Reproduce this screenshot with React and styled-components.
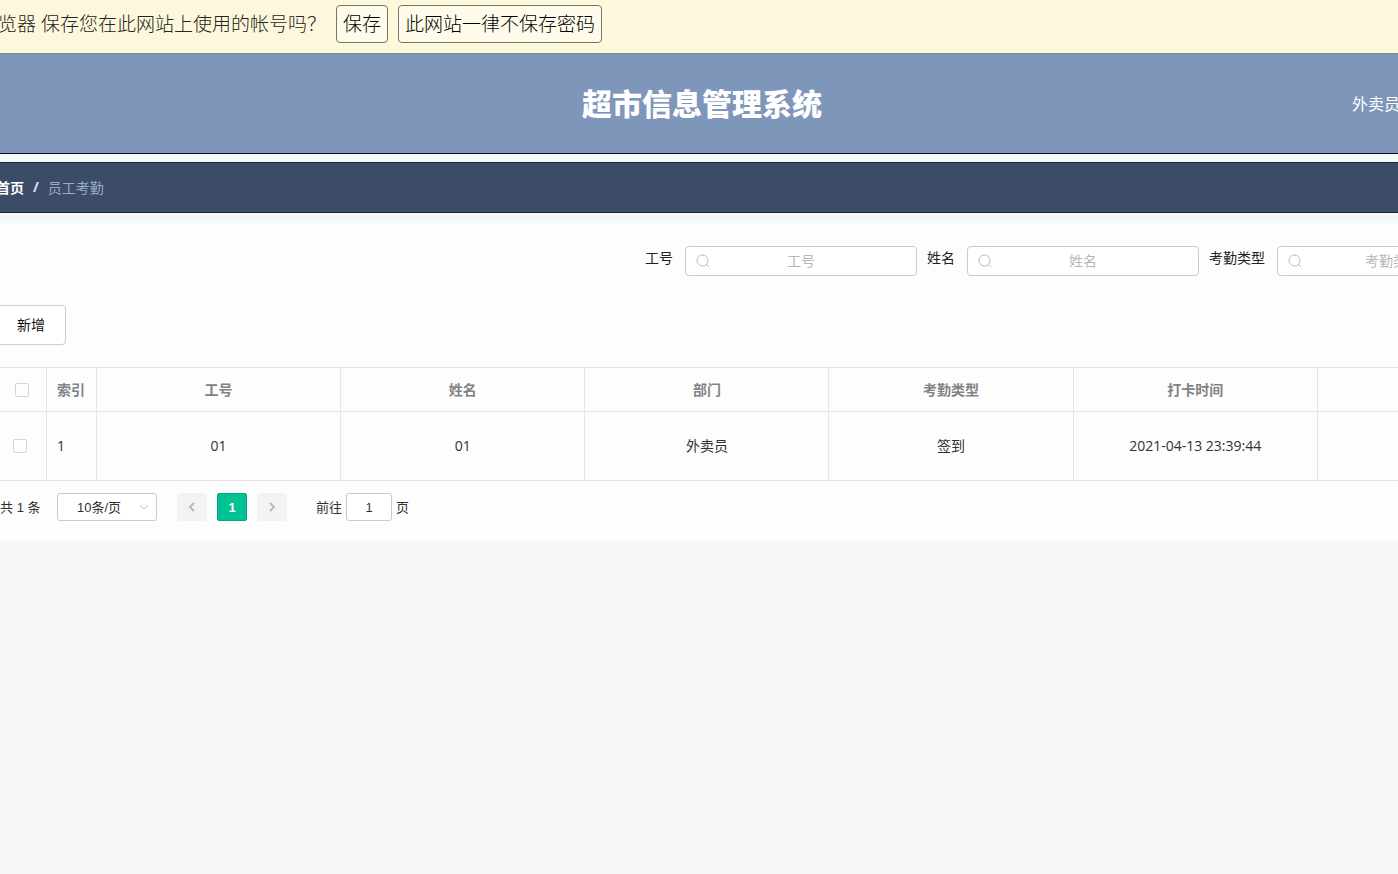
import React, { useState } from 'react';
import styled, { createGlobalStyle } from 'styled-components';

const GlobalStyle = createGlobalStyle`
  * {
    box-sizing: border-box;
  }

  body {
    margin: 0;
    background: #f6f7f9;
    color: #303133;
    font-family: "Open Sans", "Noto Sans CJK SC", sans-serif;
    font-size: 14px;
    overflow: hidden;
  }

  button, input, select {
    font-family: inherit;
    margin: 0;
  }
`;

const Page = styled.div`
  margin-left: -4px;
  overflow: hidden;
`;

const Notice = styled.div`
  display: flex;
  align-items: flex-start;
  height: 54px;
  padding: 5px 2px;
  background: #fdf8dc;
  border-bottom: 1px solid #7c8a9a;
  white-space: nowrap;
`;

const NoticeText = styled.span`
  width: 338px;
  color: #222;
  font-size: 19px;
  font-weight: 300;
  line-height: 38px;
`;

const NoticeButton = styled.button`
  height: 38px;
  margin-right: 10px;
  padding: 0 6px;
  background: #fefbeb;
  border: 1px solid #77756a;
  border-radius: 4px;
  color: #000;
  font-size: 19px;
  font-weight: 300;
  line-height: 34px;
`;

const Header = styled.header`
  display: grid;
  grid-template-columns: 1fr auto 1fr;
  align-items: center;
  height: 100px;
  padding-left: 10px;
  background: #7f96bb;
  border-bottom: 1px solid #0b0f18;
  color: #fff;
`;

const Title = styled.h1`
  grid-column: 2;
  margin: 0;
  font-size: 30px;
  font-weight: 900;
  line-height: 40px;
`;

const UserName = styled.span`
  justify-self: end;
  margin-right: -2px;
  padding-bottom: 2px;
  font-size: 16px;
  white-space: nowrap;
`;

const Breadcrumb = styled.nav`
  display: flex;
  align-items: center;
  gap: 9px;
  height: 51px;
  margin: 8px 0 10px;
  padding-bottom: 2px;
  background: #3c4c68;
  border: solid #1c2735;
  border-width: 1px 0;
  color: #9aabcb;

  a {
    color: #fff;
    font-weight: 700;
    text-decoration: none;
  }
`;

const Slash = styled.span`
  color: #dfe5ef;
  font-weight: 700;
`;

const Card = styled.main`
  padding: 23px 0 20px;
  background: #fdfdfd;
`;

const SearchForm = styled.form`
  display: flex;
  justify-content: flex-end;
  gap: 10px;
  margin-right: -111px;
`;

const Field = styled.label`
  display: flex;
  gap: 12px;
  color: #1f2226;
  line-height: 24px;
  white-space: nowrap;
`;

const InputBox = styled.span`
  position: relative;
  display: block;
  width: 232px;

  svg {
    position: absolute;
    top: 8px;
    left: 11px;
  }
`;

const SearchInput = styled.input`
  display: block;
  width: 100%;
  height: 30px;
  padding: 0 30px 2px;
  background: #fff;
  border: 1px solid #c8cad0;
  border-radius: 4px;
  color: #303133;
  font-size: 14px;
  text-align: center;

  &::placeholder {
    color: #b4b7bd;
  }
`;

const AddButton = styled.button`
  display: block;
  height: 40px;
  margin: 29px 0 22px;
  padding: 0 20px 2px;
  background: #fff;
  border: 1px solid #ccced4;
  border-radius: 4px;
  color: #111;
  font-size: 14px;
`;

const Table = styled.table`
  width: calc(100% + 164px);
  border-collapse: separate;
  border-spacing: 0;
  border-top: 1px solid #e3e5ea;
  table-layout: fixed;
`;

const Col = styled.col`
  width: ${(props) => props.$width || 'auto'};
`;

const HeadCell = styled.th`
  height: 44px;
  padding: ${(props) => (props.$check ? '0 10px' : '0 10px 2px')};
  border: solid #e3e5ea;
  border-width: 0 1px 1px 0;
  color: #808286;
  font-size: 14px;
  font-weight: 700;
  text-align: ${(props) => props.$align || 'center'};
`;

const Cell = styled.td`
  height: 69px;
  padding: ${(props) => (props.$check ? '0 10px' : '0 10px 2px')};
  border: solid #e3e5ea;
  border-width: 0 1px 1px 0;
  font-size: 14px;
  text-align: ${(props) => props.$align || 'center'};
`;

const Checkbox = styled.input`
  display: block;
  width: 14px;
  height: 14px;
  margin: 0 ${(props) => (props.$head ? '9px' : '7px')};
  appearance: none;
  background: #fff;
  border: 1px solid #d3d5da;
  border-radius: 2px;

  &:checked {
    background: #00c292;
    border-color: #00c292;
  }
`;

const Pagination = styled.div`
  display: flex;
  align-items: center;
  gap: 10px;
  height: 28px;
  margin-top: 12px;
  padding-left: 4px;
  font-family: "Liberation Sans", "Noto Sans CJK SC", sans-serif;
  font-size: 13px;
`;

const Total = styled.span`
  width: 47px;
  padding-bottom: 2px;
  white-space: nowrap;
`;

const SizeBox = styled.span`
  position: relative;
  margin-right: 10px;

  svg {
    position: absolute;
    top: 11px;
    right: 8px;
    pointer-events: none;
  }
`;

const SizeSelect = styled.select`
  display: block;
  width: 100px;
  height: 28px;
  padding: 0 19px;
  appearance: none;
  background: #fff;
  border: 1px solid #c8cad0;
  border-radius: 3px;
  color: #303133;
  font-size: 13px;
`;

const PageButton = styled.button`
  display: flex;
  align-items: center;
  justify-content: center;
  width: 30px;
  height: 28px;
  padding: 0;
  background: ${(props) => (props.$active ? '#00c292' : '#f3f3f4')};
  border: ${(props) => (props.$active ? '1px solid #07a57e' : 'none')};
  border-radius: 2px;
  color: ${(props) => (props.$active ? '#fff' : '#b4b7bd')};
  font-size: 13px;
  font-weight: 700;
`;

const Jumper = styled.label`
  display: flex;
  align-items: center;
  gap: 4px;
  margin-left: 19px;
  white-space: nowrap;

  span {
    padding-bottom: 2px;
  }
`;

const JumpInput = styled.input`
  width: 46px;
  height: 28px;
  padding: 0;
  background: #fff;
  border: 1px solid #c8cad0;
  border-radius: 3px;
  color: #303133;
  font-size: 13px;
  text-align: center;
`;

const SearchIcon = () => (
  <svg width="14" height="14" viewBox="0 0 14 14" fill="none" stroke="#b4b7bd">
    <circle cx="6.5" cy="6.5" r="5.5" />
    <path d="M10.5 10.5L12.8 12.8" />
  </svg>
);

const Chevron = ({ d, width, height, weight }) => (
  <svg width={width} height={height} viewBox={`0 0 ${width} ${height}`} fill="none" stroke="#b4b7bd" strokeWidth={weight}>
    <path d={d} />
  </svg>
);

const SearchField = ({ label }) => (
  <Field>
    {label}
    <InputBox>
      <SearchInput type="text" placeholder={label} />
      <SearchIcon />
    </InputBox>
  </Field>
);

const fields = ['工号', '姓名', '考勤类型'];
const columns = ['工号', '姓名', '部门', '考勤类型', '打卡时间', ''];
const rows = [['01', '01', '外卖员', '签到', '2021-04-13 23:39:44', '']];

const App = () => {
  const [selected, setSelected] = useState([]);
  const [page, setPage] = useState('1');

  const toggleRow = (index) => {
    setSelected(selected.includes(index) ? selected.filter((i) => i !== index) : [...selected, index]);
  };

  const toggleAll = () => {
    setSelected(selected.length === rows.length ? [] : rows.map((row, index) => index));
  };

  return (
    <Page>
      <GlobalStyle />
      <Notice>
        <NoticeText>览器 保存您在此网站上使用的帐号吗？</NoticeText>
        <NoticeButton type="button">保存</NoticeButton>
        <NoticeButton type="button">此网站一律不保存密码</NoticeButton>
      </Notice>
      <Header>
        <Title>超市信息管理系统</Title>
        <UserName>外卖员</UserName>
      </Header>
      <Breadcrumb>
        <a href="#home">首页</a>
        <Slash>/</Slash>
        <span>员工考勤</span>
      </Breadcrumb>
      <Card>
        <SearchForm>
          {fields.map((label) => (
            <SearchField key={label} label={label} />
          ))}
        </SearchForm>
        <AddButton type="button">新增</AddButton>
        <Table>
          <colgroup>
            <Col $width="51px" />
            <Col $width="50px" />
            {columns.map((name, index) => (
              <Col key={index} />
            ))}
          </colgroup>
          <thead>
            <tr>
              <HeadCell $check>
                <Checkbox
                  type="checkbox"
                  aria-label="全选"
                  $head
                  checked={selected.length === rows.length}
                  onChange={toggleAll}
                />
              </HeadCell>
              <HeadCell $align="left">索引</HeadCell>
              {columns.map((name, index) => (
                <HeadCell key={index}>{name}</HeadCell>
              ))}
            </tr>
          </thead>
          <tbody>
            {rows.map((row, index) => (
              <tr key={index}>
                <Cell $check>
                  <Checkbox
                    type="checkbox"
                    aria-label={`选择 ${index + 1}`}
                    checked={selected.includes(index)}
                    onChange={() => toggleRow(index)}
                  />
                </Cell>
                <Cell $align="left">{index + 1}</Cell>
                {row.map((value, i) => (
                  <Cell key={i}>{value}</Cell>
                ))}
              </tr>
            ))}
          </tbody>
        </Table>
        <Pagination>
          <Total>共 {rows.length} 条</Total>
          <SizeBox>
            <SizeSelect aria-label="每页条数">
              <option>10条/页</option>
            </SizeSelect>
            <Chevron d="M1 1L5 5L9 1" width={10} height={6} weight={1} />
          </SizeBox>
          <PageButton type="button" aria-label="上一页">
            <Chevron d="M6 1L2 5L6 9" width={8} height={10} weight={2} />
          </PageButton>
          <PageButton type="button" $active>1</PageButton>
          <PageButton type="button" aria-label="下一页">
            <Chevron d="M2 1L6 5L2 9" width={8} height={10} weight={2} />
          </PageButton>
          <Jumper>
            <span>前往</span>
            <JumpInput type="text" value={page} onChange={(e) => setPage(e.target.value)} />
            <span>页</span>
          </Jumper>
        </Pagination>
      </Card>
    </Page>
  );
};

export default App;
